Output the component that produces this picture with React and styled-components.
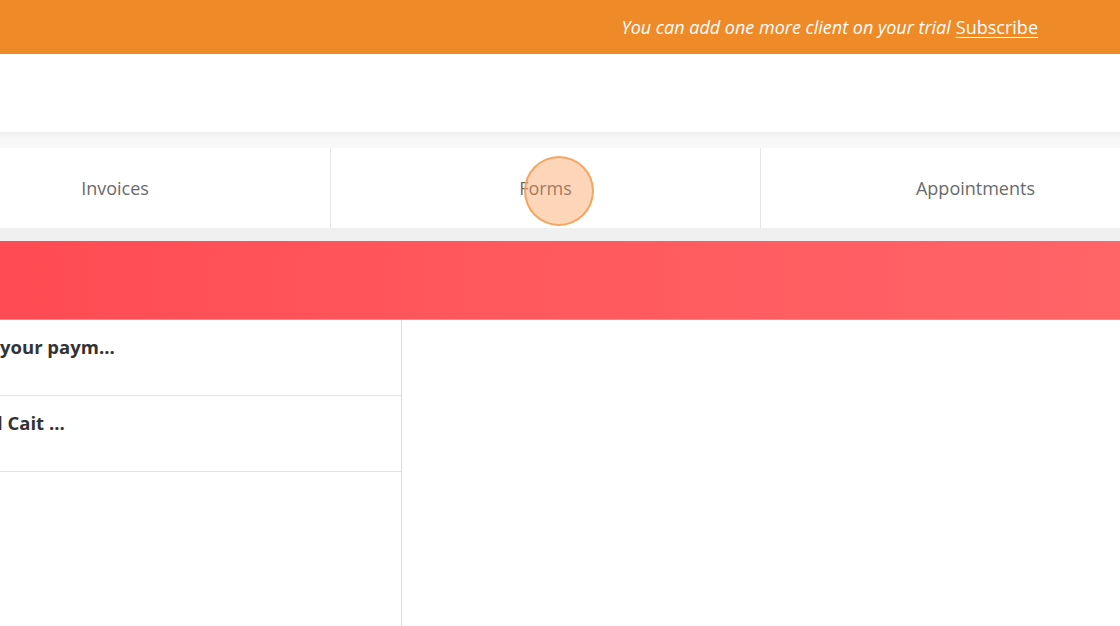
import React from 'react';
import styled, { createGlobalStyle } from 'styled-components';

const GlobalStyle = createGlobalStyle`
  html, body {
    margin: 0;
    padding: 0;
    background: #ffffff;
    font-family: "Open Sans", "Liberation Sans", sans-serif;
  }
  #root {
    width: 1120px;
    height: 626px;
    overflow: hidden;
  }
`;

const Page = styled.div`
  width: 1120px;
  height: 626px;
  overflow: hidden;
  position: relative;
  display: flex;
  flex-direction: column;
  background: #fff;
`;

const TrialBanner = styled.div`
  height: 54px;
  flex-shrink: 0;
  background: #ee8a28;
  display: flex;
  align-items: center;
  justify-content: flex-end;
  padding-right: 82px;
  color: #fff;
  font-size: 18px;
`;

const BannerText = styled.span`
  font-style: italic;
  margin-right: 5px;
`;

const SubscribeLink = styled.a`
  color: #fff;
  text-decoration: underline;
  text-underline-offset: 3px;
`;

const Header = styled.div`
  height: 78px;
  flex-shrink: 0;
  background: #fff;
`;

const Gutter = styled.div`
  height: ${p => p.$h}px;
  flex-shrink: 0;
  background: ${p => p.$top ? 'linear-gradient(#efefef, #f8f8f8 40%, #f8f8f8)' : '#f0f0f0'};
`;

const TabRow = styled.div`
  height: 80px;
  flex-shrink: 0;
  display: flex;
  margin-left: -100px;
  background: #fff;
`;

const Tab = styled.div`
  width: 430px;
  flex-shrink: 0;
  display: flex;
  align-items: center;
  justify-content: center;
  font-size: 18px;
  color: #6a6a6a;
  border-left: ${p => p.$first ? 'none' : '1.5px solid #e6e6e6'};
  box-sizing: border-box;
`;

const HeroBar = styled.div`
  height: 78px;
  flex-shrink: 0;
  background: linear-gradient(90deg, #ff4b53 0%, #ff5a5e 50%, #ff6467 100%);
  border-bottom: 1px solid #a8a8a8;
`;

const Body = styled.div`
  flex: 1;
  display: flex;
`;

const ListColumn = styled.div`
  width: 401px;
  border-right: 1.5px solid #dcdcdc;
  display: flex;
  flex-direction: column;
`;

const ListRow = styled.div`
  height: 76px;
  box-sizing: border-box;
  border-bottom: 1.5px solid #e2e2e2;
  padding-top: 14px;
  font-size: 18.5px;
  font-weight: 700;
  color: #333;
  white-space: nowrap;
  overflow: hidden;
`;

const RowTitle = styled.span`
  display: inline-block;
  margin-left: ${p => p.$shift}px;
`;

const Touch = styled.div`
  position: absolute;
  left: 524px;
  top: 156px;
  width: 70px;
  height: 70px;
  border-radius: 50%;
  box-sizing: border-box;
  background: rgba(250, 150, 80, 0.4);
  border: 2.5px solid rgba(244, 160, 84, 0.9);
`;

export default function App() {
  return (
    <>
      <GlobalStyle />
      <Page>
        <TrialBanner>
          <BannerText>You can add one more client on your trial</BannerText>
          <SubscribeLink>Subscribe</SubscribeLink>
        </TrialBanner>
        <Header />
        <Gutter $h={16} $top />
        <TabRow>
          <Tab $first>Invoices</Tab>
          <Tab>Forms</Tab>
          <Tab>Appointments</Tab>
        </TabRow>
        <Gutter $h={13} />
        <HeroBar />
        <Body>
          <ListColumn>
            <ListRow><RowTitle $shift={0}>your paym...</RowTitle></ListRow>
            <ListRow><RowTitle $shift={-3}>l Cait ...</RowTitle></ListRow>
          </ListColumn>
        </Body>
        <Touch />
      </Page>
    </>
  );
}
